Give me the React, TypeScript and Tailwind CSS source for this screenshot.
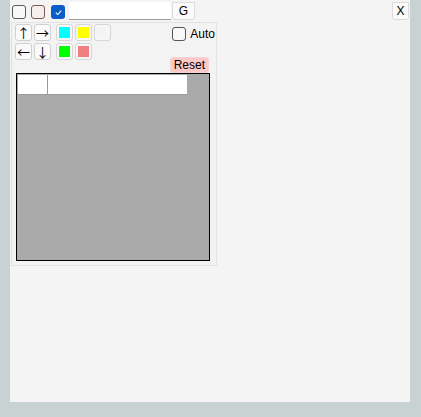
import React from "react";

const arrowBtn =
  "w-[17px] h-[17px] flex items-center justify-center rounded-[3px] border border-[#d0d0d0] bg-[#fafafa] text-[13px] leading-none text-black font-['Noto_Sans_CJK_JP',sans-serif]";

function Swatch({ color }: { color: string }) {
  return (
    <div className="w-[17px] h-[17px] p-[2px] rounded-[3px] border border-[#d6d6d6] bg-[#f7f7f7]">
      <div className="w-full h-full" style={{ background: color }} />
    </div>
  );
}

export default function App() {
  return (
    <div
      className="w-[421px] h-[417px] bg-[#c9d2d3] pl-[10px]"
      style={{ fontFamily: '"Liberation Sans", Arial, sans-serif' }}
    >
      <div className="w-[400px] h-[402px] bg-[#f4f4f4] flex flex-col">
        {/* Top bar */}
        <div className="flex items-start h-[22px] pt-[2px]">
          <div className="mt-[3px] ml-[2px] w-[14px] h-[14px] rounded-[3px] border border-[#5a5a5a] bg-[#f8f8f8]" />
          <div className="mt-[3px] ml-[5px] w-[14px] h-[14px] rounded-[3px] border border-[#7a5a5a] bg-[#f6eded]" />
          <div className="mt-[3px] ml-[6px] w-[14px] h-[14px] rounded-[3px] bg-[#0b5ec9] flex items-center justify-center">
            <svg width="9" height="9" viewBox="0 0 10 10">
              <path d="M2 5.2 L4.2 7.3 L8 3" stroke="#fff" strokeWidth="1.2" fill="none" />
            </svg>
          </div>
          <div className="ml-[4px] w-[102px] h-[18px] bg-white border-b border-[#9a9a9a]" />
          <div className="ml-[1px] w-[23px] h-[18px] flex items-center justify-center bg-[#fbfbfb] border border-[#dcdcdc] rounded-b-[3px] text-[12px] text-black">
            G
          </div>
          <div className="ml-auto mr-[1px] w-[17px] h-[18px] flex items-center justify-center bg-[#fbfbfb] border border-[#dcdcdc] rounded-b-[3px] text-[12px] text-black">
            X
          </div>
        </div>

        {/* Inner panel */}
        <div className="ml-[1px] w-[206px] h-[244px] border border-[#e2e2e2] bg-[#f3f3f3] flex flex-col">
          <div className="flex h-[50px] pt-[1px]">
            <div className="ml-[3px] grid grid-cols-2 gap-[2px] h-[36px]">
              <div className={arrowBtn}>{"\u2191\uFE0E"}</div>
              <div className={arrowBtn}>{"\u2192\uFE0E"}</div>
              <div className={arrowBtn}>{"\u2190\uFE0E"}</div>
              <div className={arrowBtn}>{"\u2193\uFE0E"}</div>
            </div>
            <div className="ml-[5px] grid grid-cols-3 gap-[2px] h-[36px]">
              <Swatch color="#00ffff" />
              <Swatch color="#ffff00" />
              <Swatch color="#f4f4f4" />
              <Swatch color="#00ff00" />
              <Swatch color="#f08080" />
            </div>
            <div className="ml-auto flex flex-col items-end">
              <div className="flex items-center mt-[1px] mr-[1px]">
                <div className="w-[14px] h-[14px] rounded-[3px] border border-[#555] bg-[#f8f8f8]" />
                <span className="ml-[4px] text-[12px] text-black">Auto</span>
              </div>
              <div className="mt-[14px] mr-[7px] h-[16px] px-[3px] flex items-center bg-[#ffc8c8] border border-[#f3d3d3] rounded-[3px] text-[12px] text-black">
                Reset
              </div>
            </div>
          </div>
          <div className="ml-[4px] w-[194px] h-[188px] border border-black bg-[#aaaaaa]">
            <div className="ml-[1px] mt-[1px] w-[169px] h-[20px] bg-white flex border-b border-[#9a9a9a]">
              <div className="w-[30px] h-full border-r border-[#9a9a9a]" />
            </div>
          </div>
        </div>
      </div>
    </div>
  );
}
